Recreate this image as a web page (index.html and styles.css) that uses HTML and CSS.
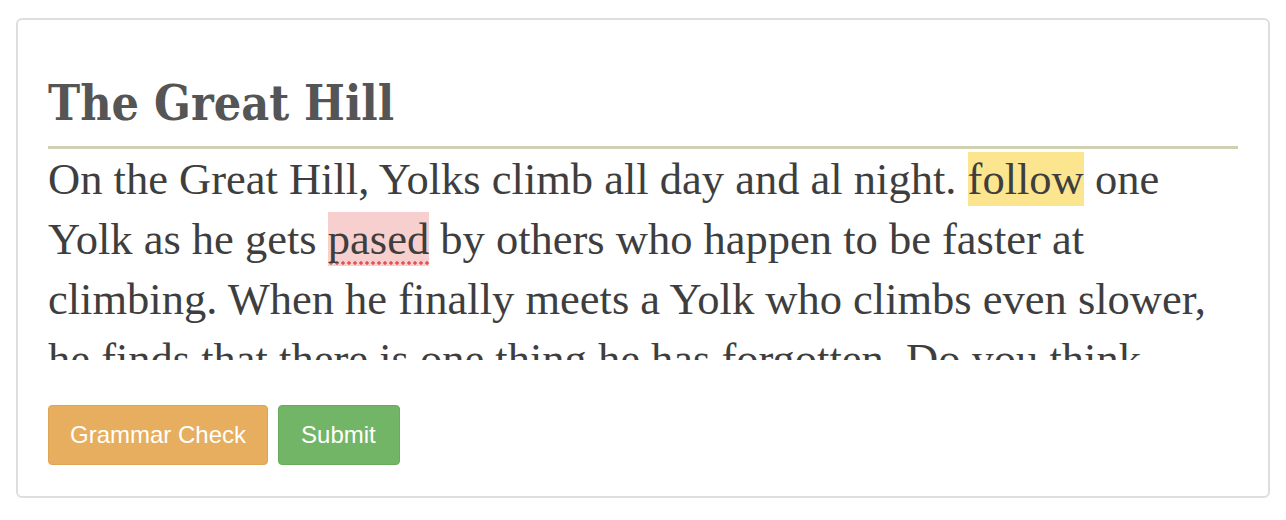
FILE: index.html
```html
<!DOCTYPE html>
<html>
<head>
<meta charset="utf-8">
<link rel="stylesheet" href="styles.css">
</head>
<body>
<div class="card">
  <h1 class="title">The Great Hill</h1>
  <div class="story">
    <p class="story-text">On the Great Hill, Yolks climb all day and al night. <span class="hl-style">follow</span> one<br>Yolk as he gets <span class="hl-spell">pased</span> by others who happen to be faster at<br>climbing. When he finally meets a Yolk who climbs even slower,<br>he finds that there is one thing he has forgotten. Do you think<br>he will remember it?</p>
  </div>
  <div class="actions">
    <button class="btn btn-warning">Grammar Check</button>
    <button class="btn btn-success">Submit</button>
  </div>
</div>
</body>
</html>
```
FILE: styles.css
```css
html, body {
  margin: 0;
  padding: 0;
  background: #ffffff;
}
body {
  padding: 18px 16px;
}
.card {
  box-sizing: border-box;
  width: 1254px;
  height: 480px;
  border: 2px solid #dedede;
  border-radius: 6px;
  padding: 30px;
  background: #fff;
}
.title {
  margin: 27px 0 0 0;
  padding-bottom: 16px;
  border-bottom: 3px solid #cfcfb2;
  font-family: "DejaVu Serif Condensed", "DejaVu Serif", serif;
  font-stretch: condensed;
  font-weight: 700;
  font-size: 48px;
  line-height: 53px;
  height: 53px;
  color: #555555;
}
.story {
  height: 211px;
  overflow: hidden;
}
.story-text {
  margin: 0;
  font-family: "Liberation Serif", serif;
  font-size: 44.5px;
  line-height: 60px;
  color: #3e3e3e;
  white-space: nowrap;
}
.hl-style {
  background: #fbe58f;
  padding: 2px 0;
}
.hl-spell {
  background-color: #f8cfcf;
  background-image: radial-gradient(circle, #e2504f 1.4px, rgba(226,80,79,0) 2px);
  background-size: 6px 4px;
  background-repeat: repeat-x;
  background-position: 0 calc(100% - 1px);
  padding: 2px 0;
}
.actions {
  display: flex;
  gap: 10px;
  margin-top: 45px;
}
.btn {
  font-family: "Liberation Sans", Arial, sans-serif;
  font-size: 24px;
  line-height: 32px;
  padding: 13px 21px;
  color: #ffffff;
  border-radius: 4px;
  border: 1px solid transparent;
  cursor: pointer;
}
.btn-warning {
  background: #e6ae5e;
  border-color: #dfa552;
}
.btn-success {
  background: #73b566;
  border-color: #68ab5b;
  padding: 13px 23px 13px 22px;
}
```
